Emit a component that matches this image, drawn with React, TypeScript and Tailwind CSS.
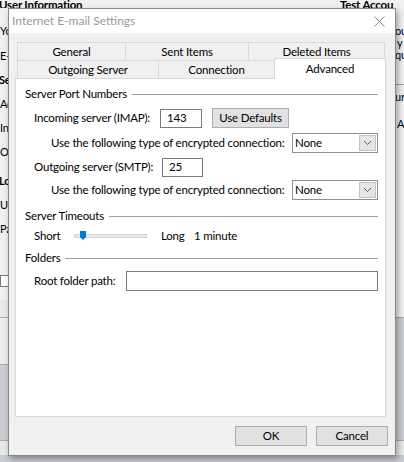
import React from "react";

const font = { fontFamily: '"Segoe UI", Lato, "Noto Sans", sans-serif' };

function Chevron() {
  return (
    <svg width="9" height="6" viewBox="0 0 9 6">
      <path d="M1 1 L4.5 4.5 L8 1" fill="none" stroke="#606060" strokeWidth="1" />
    </svg>
  );
}

function Select() {
  return (
    <div className="ml-auto flex h-[20px] w-[86px] items-center border border-[#8f8f8f] bg-white pl-[2px] pr-[1px]">
      <span className="flex-1 leading-none">None</span>
      <div className="flex h-[16px] w-[17px] items-center justify-center border border-[#c4c4c4] bg-[#e5e5e5]">
        <Chevron />
      </div>
    </div>
  );
}

function GroupHeader({ title }: { title: string }) {
  return (
    <div className="flex h-[16px] items-center">
      <span className="leading-none">{title}</span>
      <div className="ml-[5px] h-px flex-1 bg-[#a0a0a0]" />
    </div>
  );
}

export default function App() {
  return (
    <div
      className="relative h-[462px] w-[404px] overflow-hidden whitespace-nowrap bg-[#c9cdd3] text-[11.5px] tracking-[-0.2px] text-black"
      style={font}
    >
      {/* background window: top strip */}
      <div className="absolute left-0 top-0 h-[8px] w-[404px] overflow-hidden bg-[#f0f0f0]">
        <div className="absolute left-[-1px] top-[-4px] font-bold">User Information</div>
        <div className="absolute left-[340px] top-[-4px] font-bold">Test Accou</div>
      </div>
      {/* background window: left strip */}
      <div className="absolute left-0 top-[8px] h-[292px] w-[8px] overflow-hidden bg-[#f0f0f0] text-[11px]">
        <div className="absolute left-0 top-[15px]">Yo</div>
        <div className="absolute left-0 top-[40px]">E-</div>
        <div className="absolute left-[-1px] top-[64px] font-bold">Se</div>
        <div className="absolute left-0 top-[88px]">Ac</div>
        <div className="absolute left-0 top-[112px]">In</div>
        <div className="absolute left-0 top-[136px]">Ou</div>
        <div className="absolute left-[-1px] top-[165px] font-bold">Lo</div>
        <div className="absolute left-0 top-[189px]">Us</div>
        <div className="absolute left-0 top-[213px]">Pa</div>
        <div className="absolute left-0 top-[267px] h-[12px] w-[30px] border border-[#7a7a7a] bg-white" />
      </div>
      {/* background window: right strip */}
      <div className="absolute left-[396px] top-[8px] h-[292px] w-[8px] overflow-hidden bg-[#f0f0f0] text-[11px]">
        <div className="absolute left-[-1px] top-[15px]">ou</div>
        <div className="absolute left-[1px] top-[27px]">y</div>
        <div className="absolute left-[-1px] top-[39px]">qu</div>
        <div className="absolute left-0 top-[76px] h-px w-[20px] bg-[#a0a0a0]" />
        <div className="absolute left-[-1px] top-[81px]">ur</div>
        <div className="absolute left-[1px] top-[108px]">A</div>
      </div>
      <div className="absolute left-0 top-[300px] h-[18px] w-[8px] border-b border-[#a9a9a9] bg-[#e9e9e9]" />
      <div className="absolute left-0 top-[318px] h-[47px] w-[8px] border-b border-[#a9a9a9] bg-[#ececec]" />
      <div className="absolute left-0 top-[440px] h-[15px] w-[8px] border-t border-[#a9a9a9] bg-[#e9e9e9]" />
      <div className="absolute left-[396px] top-[300px] h-[18px] w-[8px] border-b border-[#a9a9a9] bg-[#f0f0f0]" />
      <div className="absolute left-[396px] top-[440px] h-[15px] w-[8px] border-t border-[#a9a9a9] bg-[#e9e9e9]" />

      {/* dialog */}
      <div className="absolute left-[8px] top-[8px] flex h-[448px] w-[388px] flex-col border border-[#888888] bg-[#f0f0f0] shadow-[2px_3px_6px_rgba(0,0,0,0.35)]">
        {/* title bar */}
        <div className="flex h-[24px] shrink-0 items-center bg-white pl-[3px]">
          <span className="flex-1 text-[12px] tracking-normal leading-none text-[#9a9a9a]">Internet E-mail Settings</span>
          <div className="mr-[10px] flex h-[12px] w-[12px] items-center justify-center">
            <svg width="11" height="11" viewBox="0 0 11 11">
              <path d="M0.5 0.5 L10.5 10.5 M10.5 0.5 L0.5 10.5" stroke="#8a8a8a" strokeWidth="1" />
            </svg>
          </div>
        </div>

        {/* tabs */}
        <div className="ml-[8px] mt-[9px] flex h-[36px] w-[369px] shrink-0 flex-col">
          <div className="flex h-[18px]">
            <div className="flex w-[108px] items-center justify-center border-l border-t border-[#d9d9d9] bg-[#f0f0f0] leading-none">General</div>
            <div className="flex w-[123px] items-center justify-center border-l border-t border-[#d9d9d9] bg-[#f0f0f0] leading-none">Sent Items</div>
            <div className="flex w-[137px] items-center justify-center border-l border-r border-t border-[#d9d9d9] bg-[#f0f0f0] leading-none">Deleted Items</div>
          </div>
          <div className="flex h-[18px]">
            <div className="flex w-[141px] items-center justify-center border-l border-t border-[#d9d9d9] bg-[#f0f0f0] leading-none">Outgoing Server</div>
            <div className="flex w-[116px] items-center justify-center border-l border-t border-[#d9d9d9] bg-[#f0f0f0] leading-none">Connection</div>
            <div className="relative z-10 -mt-[2px] flex h-[21px] w-[112px] items-start justify-center border-l border-r border-t border-[#d9d9d9] bg-white pt-[4px] leading-none">Advanced</div>
          </div>
        </div>

        {/* panel */}
        <div className="ml-[6px] flex h-[339px] w-[371px] shrink-0 flex-col border border-[#d9d9d9] bg-white pl-[9px] pr-[7px]">
          <div className="mt-[7px]">
            <GroupHeader title="Server Port Numbers" />
          </div>
          <div className="ml-[9px] mt-[6px] flex h-[20px] items-center">
            <span className="w-[126px] leading-none">Incoming server (IMAP):</span>
            <div className="flex h-[19px] w-[42px] items-center border border-[#7a7a7a] bg-white pl-[6px] leading-none">143</div>
            <div className="ml-[10px] flex h-[20px] w-[77px] items-center justify-center border border-[#adadad] bg-[#e1e1e1] leading-none">Use Defaults</div>
          </div>
          <div className="ml-[26px] mt-[5px] flex h-[20px] items-center">
            <span className="leading-none">Use the following type of encrypted connection:</span>
            <Select />
          </div>
          <div className="ml-[9px] mt-[4px] flex h-[20px] items-center">
            <span className="w-[128px] leading-none">Outgoing server (SMTP):</span>
            <div className="flex h-[19px] w-[41px] items-center border border-[#7a7a7a] bg-white pl-[6px] leading-none">25</div>
          </div>
          <div className="ml-[26px] mt-[3px] flex h-[20px] items-center">
            <span className="leading-none">Use the following type of encrypted connection:</span>
            <Select />
          </div>
          <div className="mt-[8px]">
            <GroupHeader title="Server Timeouts" />
          </div>
          <div className="ml-[9px] mt-[4px] flex h-[16px] items-center">
            <span className="w-[40px] leading-none">Short</span>
            <div className="relative h-[4px] w-[73px] border border-[#d6d6d6] bg-[#e7eaea]">
              <svg className="absolute left-[5px] top-[-4px]" width="6" height="9" viewBox="0 0 6 9">
                <path d="M0 0 H6 V6 L3 9 L0 6 Z" fill="#0078d7" />
              </svg>
            </div>
            <span className="ml-[14px] w-[33px] leading-none">Long</span>
            <span className="leading-none">1 minute</span>
          </div>
          <div className="mt-[6px]">
            <GroupHeader title="Folders" />
          </div>
          <div className="ml-[9px] mt-[5px] flex h-[20px] items-center">
            <span className="w-[92px] leading-none">Root folder path:</span>
            <div className="h-[20px] flex-1 border border-[#7a7a7a] bg-white" />
          </div>
        </div>

        {/* buttons */}
        <div className="mr-[7px] mt-[9px] flex justify-end gap-[9px]">
          <div className="flex h-[20px] w-[72px] items-center justify-center border border-[#adadad] bg-[#e1e1e1] leading-none">OK</div>
          <div className="flex h-[20px] w-[72px] items-center justify-center border border-[#adadad] bg-[#e1e1e1] leading-none">Cancel</div>
        </div>
      </div>
    </div>
  );
}
